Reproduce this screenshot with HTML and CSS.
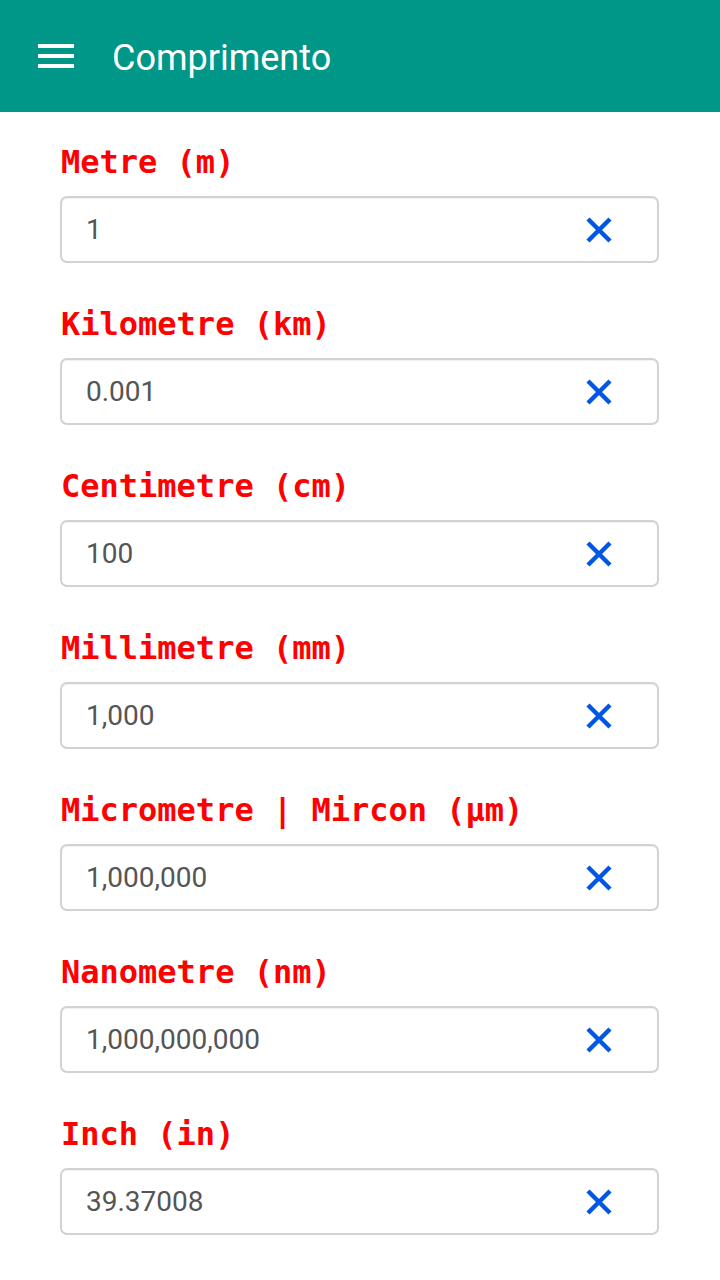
FILE: index.html
```html
<!DOCTYPE html>
<html lang="pt">
<head>
<meta charset="utf-8">
<title>Comprimento</title>
<link rel="stylesheet" href="styles.css">
</head>
<body>
<header class="appbar">
  <div class="menu-icon"><span></span><span></span><span></span></div>
  <h1 class="title">Comprimento</h1>
</header>
<main class="list">
  <section class="field">
    <label class="label">Metre (m)</label>
    <div class="box"><span class="value">1</span><span class="clear"><svg viewBox="0 0 26 26" width="26" height="26"><path d="M2 2L24 24M24 2L2 24"/></svg></span></div>
  </section>
  <section class="field">
    <label class="label">Kilometre (km)</label>
    <div class="box"><span class="value">0.001</span><span class="clear"><svg viewBox="0 0 26 26" width="26" height="26"><path d="M2 2L24 24M24 2L2 24"/></svg></span></div>
  </section>
  <section class="field">
    <label class="label">Centimetre (cm)</label>
    <div class="box"><span class="value">100</span><span class="clear"><svg viewBox="0 0 26 26" width="26" height="26"><path d="M2 2L24 24M24 2L2 24"/></svg></span></div>
  </section>
  <section class="field">
    <label class="label">Millimetre (mm)</label>
    <div class="box"><span class="value">1,000</span><span class="clear"><svg viewBox="0 0 26 26" width="26" height="26"><path d="M2 2L24 24M24 2L2 24"/></svg></span></div>
  </section>
  <section class="field">
    <label class="label">Micrometre | Mircon (µm)</label>
    <div class="box"><span class="value">1,000,000</span><span class="clear"><svg viewBox="0 0 26 26" width="26" height="26"><path d="M2 2L24 24M24 2L2 24"/></svg></span></div>
  </section>
  <section class="field">
    <label class="label">Nanometre (nm)</label>
    <div class="box"><span class="value">1,000,000,000</span><span class="clear"><svg viewBox="0 0 26 26" width="26" height="26"><path d="M2 2L24 24M24 2L2 24"/></svg></span></div>
  </section>
  <section class="field">
    <label class="label">Inch (in)</label>
    <div class="box"><span class="value">39.37008</span><span class="clear"><svg viewBox="0 0 26 26" width="26" height="26"><path d="M2 2L24 24M24 2L2 24"/></svg></span></div>
  </section>
</main>
</body>
</html>
```
FILE: styles.css
```css
html, body {
  margin: 0;
  padding: 0;
  background: #ffffff;
}
body {
  width: 720px;
  height: 1280px;
  overflow: hidden;
  font-family: Roboto, "Liberation Sans", sans-serif;
}
.appbar {
  height: 112px;
  background: #009688;
  display: flex;
  align-items: center;
  padding-left: 38px;
  box-sizing: border-box;
}
.menu-icon {
  width: 36px;
  display: flex;
  flex-direction: column;
  gap: 6px;
  margin-top: 0;
}
.menu-icon span {
  display: block;
  height: 4px;
  background: #ffffff;
}
.title {
  margin: 0 0 0 38px;
  font-family: Roboto, sans-serif;
  font-weight: 400;
  font-size: 36px;
  color: #ffffff;
  line-height: 40px;
  position: relative;
  top: 2px;
}
.list {
  padding: 31px 61px 0 60px;
  display: flex;
  flex-direction: column;
  gap: 42px;
}
.field {
  display: flex;
  flex-direction: column;
  gap: 15px;
}
.label {
  font-family: "DejaVu Sans Mono", "Liberation Mono", monospace;
  font-weight: 700;
  font-size: 32px;
  line-height: 38px;
  color: #ff0000;
  padding-left: 1px;
}
.box {
  height: 67px;
  box-sizing: border-box;
  border: 2px solid #d2d2d2;
  border-radius: 7px;
  box-shadow: inset 0 1px 1px rgba(0,0,0,0.06);
  display: flex;
  align-items: center;
  justify-content: space-between;
  padding: 0 45px 0 24px;
}
.value {
  font-family: Roboto, sans-serif;
  font-size: 28px;
  color: #555555;
  line-height: 32px;
}
.clear {
  width: 26px;
  height: 26px;
  display: flex;
}
.clear svg {
  stroke: #0057e6;
  stroke-width: 4.5;
  fill: none;
}
```
